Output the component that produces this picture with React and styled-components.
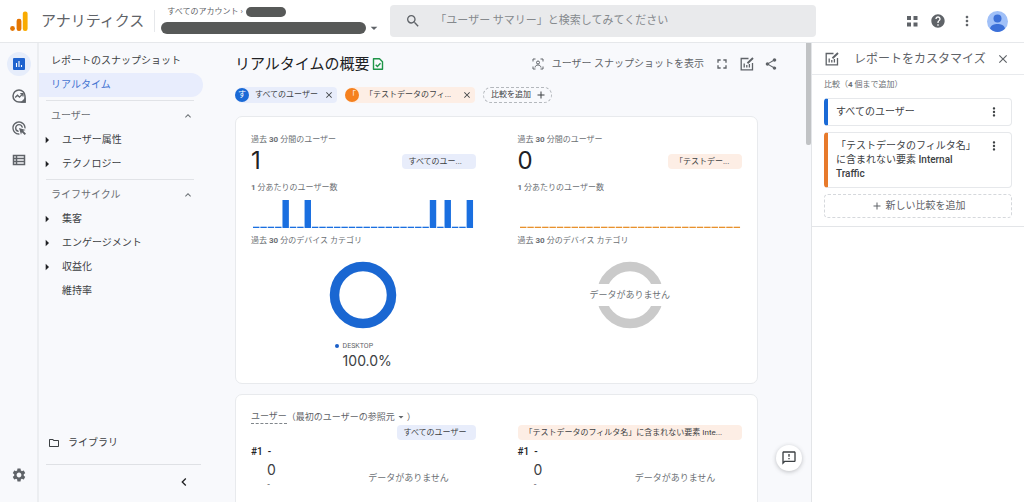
import React from 'react'
import styled, { createGlobalStyle } from 'styled-components'
import {
  MdSearch, MdHelp, MdMoreVert, MdSettings, MdShare, MdFullscreen, MdClose, MdAdd,
  MdExpandLess, MdArrowRight, MdArrowDropDown, MdOutlineFolder, MdChevronLeft,
  MdOutlineFeedback, MdAdsClick
} from 'react-icons/md'

const GlobalStyle = createGlobalStyle`
  * { box-sizing: border-box; }
  body {
    margin: 0;
    background: #f8f9fc;
    color: #3c4043;
    font-family: Roboto, "Noto Sans CJK JP", sans-serif;
    font-size: 10px;
    line-height: 14px;
  }
  h1, h2, h3, p { margin: 0; padding: 0; font-weight: 400; }
  a { color: inherit; text-decoration: none; }
  b { font-weight: 500; }
  button {
    margin: 0;
    padding: 0;
    border: 0;
    background: none;
    color: inherit;
    font: inherit;
    cursor: pointer;
  }
  svg { display: block; flex: none; }
`

const Page = styled.div`
  display: flex;
  flex-direction: column;
  height: 100vh;
  overflow: hidden;
`

/* header */
const Header = styled.header`
  display: flex;
  align-items: center;
  flex: none;
  height: 43px;
  padding: 0 16px 0 9px;
  background: #fff;
  border-bottom: 1px solid #e6e8eb;
`
const Brand = styled.a`
  display: flex;
  align-items: center;
  gap: 12px;
  padding-right: 10px;
  border-right: 1px solid #e6e8eb;
  font-size: 15px;
  line-height: 20px;
  color: #5f6368;
`
const Account = styled.button`
  display: grid;
  grid-template-columns: 205px 14px;
  align-items: center;
  row-gap: 3px;
  margin-left: 6px;
  text-align: left;
`
const AccountPath = styled.span`
  display: flex;
  align-items: center;
  grid-column: 1 / 3;
  padding-left: 6px;
  gap: 3px;
  font-size: 8px;
  line-height: 10px;
  color: #5f6368;
`
const Redacted = styled.span`
  width: ${props => props.w}px;
  height: ${props => props.h}px;
  border-radius: 6px;
  background: #575958;
`
const Search = styled.label`
  display: flex;
  align-items: center;
  flex: 1;
  gap: 14px;
  height: 32px;
  margin-left: 10px;
  padding: 0 15px;
  border-radius: 4px;
  background: #e9eaec;
  color: #5f6368;
`
const SearchInput = styled.input`
  flex: 1;
  min-width: 0;
  padding: 0;
  border: 0;
  outline: 0;
  background: none;
  font: inherit;
  font-size: 11px;
  line-height: 16px;
  color: #3c4043;
  &::placeholder { color: #85898d; opacity: 1; }
`
const HeaderTools = styled.div`
  display: flex;
  align-items: center;
  justify-content: space-between;
  width: 102px;
  margin-left: 90px;
  color: #5f6368;
`
const Body = styled.div`
  display: flex;
  flex: 1;
  min-height: 0;
`

/* left rail */
const Rail = styled.nav`
  display: flex;
  flex-direction: column;
  align-items: center;
  gap: 8px;
  flex: none;
  width: 39px;
  padding: 9px 0 15px;
  border-right: 2px solid #eceef1;
  color: #5f6368;
`
const RailLink = styled.a`
  display: grid;
  place-items: center;
  width: 24px;
  height: 24px;
  border-radius: 12px;
  background: ${props => props.$active ? '#e6edfb' : 'none'};
  &:last-child { margin-top: auto; }
`

/* report navigation */
const Nav = styled.nav`
  display: flex;
  flex-direction: column;
  flex: none;
  width: 164px;
  padding: 6px 0 12px;
`
const NavLink = styled.a`
  display: flex;
  align-items: center;
  height: 24px;
  padding-left: 12px;
  border-radius: 0 12px 12px 0;
  background: ${props => props.$active ? '#e8edfd' : 'none'};
  color: ${props => props.$active ? '#4272d0' : '#3c4043'};
`
const NavGroup = styled.section`
  margin: 3px 9px 0 7px;
  padding-top: 3px;
  border-top: 1px solid #e1e3e7;
`
const GroupHead = styled.button`
  display: flex;
  align-items: center;
  justify-content: space-between;
  width: 100%;
  height: 24px;
  padding-left: 5px;
  color: #6b6f74;
`
const SubLink = styled.a`
  display: flex;
  align-items: center;
  height: 24px;
  padding-left: ${props => props.$leaf ? 16 : 0}px;
  gap: 7px;
  svg { margin-left: -7px; }
`
const NavFoot = styled.div`
  display: flex;
  flex-direction: column;
  margin: auto 2px 0 7px;
`
const Library = styled.a`
  display: flex;
  align-items: center;
  gap: 8px;
  padding: 0 2px 14px;
  border-bottom: 1px solid #dfe1e5;
`
const Collapse = styled.button`
  align-self: flex-end;
  margin: 9px 9px 0 0;
  color: #202124;
`

/* report */
const Main = styled.main`
  flex: 1;
  min-width: 0;
  padding: 11px 48px 0 32px;
  overflow: hidden;
`
const TitleRow = styled.div`
  display: flex;
  align-items: center;
  height: 20px;
  margin-right: -20px;
`
const Title = styled.h1`
  margin-right: 2px;
  font-size: 15px;
  line-height: 20px;
  color: #202124;
`
const Tools = styled.div`
  display: flex;
  align-items: center;
  gap: 10px;
  margin-left: auto;
  color: #5f6368;
`
const SnapshotButton = styled.button`
  display: flex;
  align-items: center;
  gap: 8px;
`
const Chips = styled.div`
  display: flex;
  align-items: center;
  gap: 8px;
  margin: 13px 0;
  font-size: 8px;
`
const tint = props => props.$tone === 'orange' ? '#fdeee5' : '#e8edfb'

const Chip = styled.div`
  display: flex;
  align-items: center;
  gap: 6px;
  min-width: ${props => props.$tone === 'orange' ? 130 : 102}px;
  height: 16px;
  padding-right: 3px;
  border-radius: 8px 4px 4px 8px;
  background: ${tint};
  button { margin-left: auto; }
`
const ChipLetter = styled.span`
  width: 14px;
  height: 14px;
  border-radius: 7px;
  background: ${props => props.$tone === 'orange' ? '#f5811f' : '#1a6ad6'};
  color: #fff;
  text-align: center;
`
const AddChip = styled.button`
  display: flex;
  align-items: center;
  gap: 4px;
  height: 16px;
  padding: 0 4px 0 7px;
  border: 1px dashed #b4b8bd;
  border-radius: 8px;
`
const Card = styled.section`
  margin-bottom: 10px;
  padding: 16px 15px 14px;
  background: #fff;
  border: 1px solid #e8eaed;
  border-radius: 7px;
`
const RankCard = styled(Card)`
  padding: 14px 15px 32px;
`
const Columns = styled.div`
  display: grid;
  grid-template-columns: 1fr 1fr;
  gap: 42px;
`
const Column = styled.div`
  display: flex;
  flex-direction: column;
  min-width: 0;
`
const Label = styled.h3`
  font-size: 8px;
  line-height: 14px;
  color: #6b6f74;
  b { font-weight: 700; }
`
const ValueRow = styled.div`
  display: flex;
  align-items: center;
  justify-content: space-between;
  height: 28px;
  margin-bottom: 6px;
`
const Value = styled.span`
  font-family: Inter, sans-serif;
  font-size: 24px;
  line-height: 28px;
  color: #202124;
`
const Tag = styled.span`
  width: ${props => props.$w};
  height: 15px;
  padding: 0 7px;
  border-radius: 4px;
  background: ${tint};
  font-size: 8px;
  line-height: 15px;
  white-space: nowrap;
  overflow: hidden;
`
const Bars = styled.svg`
  width: 100%;
  height: 28px;
  margin: 5px 0 6px;
`
const DonutWrap = styled.div`
  display: grid;
  place-items: center;
  margin-top: 13px;
  > * { grid-area: 1 / 1; }
`
const Empty = styled.p`
  font-size: 9px;
  line-height: 22px;
  color: #6b6f74;
  background: #fff;
`
const Legend = styled.div`
  display: grid;
  grid-template-columns: 4px auto;
  align-items: center;
  align-self: center;
  column-gap: 4px;
  margin: 10px 0 0;
  font-size: 7px;
  color: #5f6368;
`
const Dot = styled.span`
  width: 4px;
  height: 4px;
  border-radius: 2px;
  background: #1a5fc8;
`
const Percent = styled.strong`
  grid-column: 2;
  font: 400 14px/16px Inter, sans-serif;
  color: #3c4043;
`
const CardTitle = styled.h2`
  display: flex;
  align-items: center;
  margin-bottom: 1px;
  font-size: 9px;
  line-height: 14px;
  color: #5f6368;
`
const Metric = styled.span`
  border-bottom: 1px dashed #80868b;
`
const RankTag = styled(Tag)`
  align-self: flex-end;
`
const Rank = styled.p`
  margin-top: 5px;
  font-size: 10px;
  font-weight: 500;
  color: #202124;
`
const RankBody = styled.div`
  display: grid;
  grid-template-columns: 1fr 134px;
  align-items: end;
  text-align: center;
`
const RankValue = styled.div`
  justify-self: start;
  padding-left: 16px;
  font: 400 14px/22px Inter, sans-serif;
  color: #3c4043;
`
const Trend = styled.small`
  display: block;
  font-size: 7px;
  line-height: 8px;
  text-align: left;
`
const Scroll = styled.div`
  flex: none;
  width: 5px;
  &::before {
    content: '';
    display: block;
    height: 102px;
    border-radius: 0 0 2px 2px;
    background: #c1c3c5;
  }
`

/* customise panel */
const Panel = styled.aside`
  flex: none;
  width: 213px;
  background: #fff;
  border-left: 1px solid #e3e5e8;
`
const PanelHead = styled.div`
  display: flex;
  align-items: center;
  height: 32px;
  padding: 0 14px 0 13px;
  border-bottom: 1px solid #e8eaed;
  color: #5f6368;
`
const PanelTitle = styled.h2`
  flex: 1;
  margin-left: 15px;
  font-size: 12px;
  line-height: 16px;
`
const PanelBody = styled.div`
  display: flex;
  flex-direction: column;
  gap: 6px;
  padding: 3px 12px 8px;
  border-bottom: 1px solid #e3e5e8;
`
const Comparison = styled.div`
  display: flex;
  align-items: flex-start;
  justify-content: space-between;
  padding: 6px 10px 6px 8px;
  border: 1px solid #e6e8eb;
  border-left: 4px solid ${props => props.$tone === 'orange' ? '#e77a2b' : '#1a6ad6'};
  border-radius: 4px;
`
const AddComparison = styled.button`
  display: flex;
  align-items: center;
  justify-content: center;
  gap: 3px;
  height: 24px;
  border: 1px dashed #d5d8dc;
  border-radius: 4px;
  color: #5f6368;
`
const Feedback = styled.button`
  position: fixed;
  right: 222px;
  bottom: 31px;
  display: grid;
  place-items: center;
  width: 26px;
  height: 26px;
  border-radius: 13px;
  background: #fff;
  box-shadow: 0 1px 4px rgba(60, 64, 67, 0.3);
`

const Logo = () => (
  <svg width="20" height="22" viewBox="0 0 20 22">
    <circle cx="3.5" cy="18.5" r="2.4" fill="#e37400" />
    <rect x="7.6" y="8.8" width="4.8" height="12.2" rx="2.2" fill="#e37400" />
    <rect x="13.8" y="1.5" width="4.8" height="19.5" rx="2.2" fill="#f9ab00" />
  </svg>
)
const Avatar = () => (
  <svg width="21" height="21" viewBox="0 0 42 42">
    <circle cx="21" cy="21" r="21" fill="#a0c0f8" />
    <circle cx="21" cy="15" r="8" fill="#3c70d8" />
    <path d="M6 35c2-7 8-9 15-9s13 2 15 9c-4 4-9 7-15 7S10 39 6 35z" fill="#3c70d8" />
  </svg>
)
const AppsIcon = () => (
  <svg width="12" height="12" viewBox="0 0 12 12" fill="currentColor">
    <path d="M1 1h4v4H1zM7.5 1h4v4h-4zM1 7.5h4v4H1zM7.5 7.5h4v4h-4z" />
  </svg>
)
const ReportsIcon = () => (
  <svg width="12" height="12" viewBox="0 0 12 12">
    <rect width="12" height="12" rx="1" fill="#1f63cf" />
    <path d="M3.5 5v4M6 3v6M8.5 7v2" stroke="#fff" strokeWidth="1.1" />
  </svg>
)
const ExploreIcon = () => (
  <svg width="14" height="14" viewBox="0 0 14 14" fill="none" stroke="currentColor" strokeWidth="1.5">
    <path d="M13 13H7a6 6 0 1 1 6-6z" />
    <path d="M3.2 8.5l2.3-2.3 2 2 3.3-3.3M8.3 4.7h2.7v2.7" strokeWidth="1.3" />
    <path d="M10 13l3-3v3z" fill="currentColor" />
  </svg>
)
const TableIcon = () => (
  <svg width="14" height="12" viewBox="0 0 14 12" fill="none" stroke="currentColor" strokeWidth="1.5">
    <path d="M1.5 1.5h11v9h-11zM1.5 4.5h11M1.5 7.5h11M4.5 1.5v9" />
  </svg>
)
const CheckDoc = () => (
  <svg width="12" height="14" viewBox="0 0 12 14" fill="none" stroke="#1e9447" strokeWidth="1.4">
    <path d="M1.5 1.7h6l3 3v7.6h-9z" strokeLinejoin="round" />
    <path d="M3.7 7.7l1.7 1.7 3.1-3.1" />
  </svg>
)
const SnapshotIcon = () => (
  <svg width="12" height="12" viewBox="0 0 12 12" fill="none" stroke="currentColor">
    <path d="M1 3.5V1h2.5M8.5 1H11v2.5M11 8.5V11H8.5M3.5 11H1V8.5" />
    <circle cx="6" cy="4.5" r="1.5" />
    <path d="M3 9.5c.5-2 1.5-2.5 3-2.5s2.5.5 3 2.5" />
  </svg>
)
const ChartEditIcon = () => (
  <svg width="14" height="14" viewBox="0 0 14 14" fill="none" stroke="currentColor" strokeWidth="1.3">
    <path d="M8.5 1.5H1.2v11.3h11.3V6" />
    <path d="M4.2 6.5v4M6.8 8v2.5M9.4 7v3.5" />
    <path d="M7.5 6.3l5.5-5.3" strokeWidth="1.9" />
  </svg>
)

const reportGroups = [
  { title: 'ユーザー', items: ['ユーザー属性', 'テクノロジー'] },
  { title: 'ライフサイクル', items: ['集客', 'エンゲージメント', '収益化', '維持率'] }
]

const MinuteBars = ({ peaks, color }) => (
  <Bars viewBox="0 0 224 28" preserveAspectRatio="none" role="img" aria-label="1 分あたりのユーザー数">
    {Array.from({ length: 30 }, (_, i) => {
      const h = peaks.includes(i) ? 28 : 1.3
      return <rect key={i} x={2 + i * 7.35} y={28 - h} width="6.4" height={h} fill={color} />
    })}
  </Bars>
)

const Donut = ({ color }) => (
  <svg width="68" height="68" viewBox="0 0 68 68">
    <circle cx="34" cy="34" r="28.5" fill="none" stroke={color} strokeWidth="9.5" />
  </svg>
)

const RankColumn = ({ tone, width, name }) => (
  <Column>
    <RankTag $tone={tone} $w={width}>{name}</RankTag>
    <Rank>#1&nbsp; -</Rank>
    <RankBody>
      <RankValue>0<Trend>-</Trend></RankValue>
      <Empty>データがありません</Empty>
    </RankBody>
  </Column>
)

const App = () => (
  <Page>
    <GlobalStyle />
    <Header>
      <Brand href="#home"><Logo />アナリティクス</Brand>
      <Account aria-label="アカウントを選択">
        <AccountPath>すべてのアカウント ›<Redacted w={40} h={10} /></AccountPath>
        <Redacted w={205} h={12} />
        <MdArrowDropDown size={16} color="#5f6368" />
      </Account>
      <Search>
        <MdSearch size={16} />
        <SearchInput type="search" aria-label="検索" placeholder="「ユーザー サマリー」と検索してみてください" />
      </Search>
      <HeaderTools>
        <button aria-label="アプリ"><AppsIcon /></button>
        <button aria-label="ヘルプ"><MdHelp size={16} /></button>
        <button aria-label="その他"><MdMoreVert size={16} /></button>
        <button aria-label="プロフィール"><Avatar /></button>
      </HeaderTools>
    </Header>
    <Body>
      <Rail>
        <RailLink href="#reports" aria-label="レポート" $active><ReportsIcon /></RailLink>
        <RailLink href="#explore" aria-label="探索"><ExploreIcon /></RailLink>
        <RailLink href="#ads" aria-label="広告"><MdAdsClick size={16} /></RailLink>
        <RailLink href="#configure" aria-label="設定"><TableIcon /></RailLink>
        <RailLink href="#admin" aria-label="管理"><MdSettings size={16} /></RailLink>
      </Rail>
      <Nav>
        <NavLink href="#snapshot">レポートのスナップショット</NavLink>
        <NavLink href="#realtime" $active>リアルタイム</NavLink>
        {reportGroups.map(group => (
          <NavGroup key={group.title}>
            <GroupHead>{group.title}<MdExpandLess size={12} /></GroupHead>
            {group.items.map(item => (
              <SubLink key={item} href="#report" $leaf={item === '維持率'}>
                {item !== '維持率' && <MdArrowRight size={16} color="#202124" />}
                {item}
              </SubLink>
            ))}
          </NavGroup>
        ))}
        <NavFoot>
          <Library href="#library"><MdOutlineFolder size={12} />ライブラリ</Library>
          <Collapse aria-label="折りたたむ"><MdChevronLeft size={16} /></Collapse>
        </NavFoot>
      </Nav>
      <Main>
        <TitleRow>
          <Title>リアルタイムの概要</Title>
          <CheckDoc />
          <Tools>
            <SnapshotButton><SnapshotIcon />ユーザー スナップショットを表示</SnapshotButton>
            <button aria-label="全画面"><MdFullscreen size={16} /></button>
            <button aria-label="カスタマイズ"><ChartEditIcon /></button>
            <button aria-label="共有"><MdShare size={14} /></button>
          </Tools>
        </TitleRow>
        <Chips>
          <Chip>
            <ChipLetter>す</ChipLetter>すべてのユーザー
            <button aria-label="削除"><MdClose size={10} /></button>
          </Chip>
          <Chip $tone="orange">
            <ChipLetter $tone="orange">「</ChipLetter>「テストデータのフィ...
            <button aria-label="削除"><MdClose size={10} /></button>
          </Chip>
          <AddChip>比較を追加<MdAdd size={12} /></AddChip>
        </Chips>
        <Card>
          <Columns>
            <Column>
              <Label>過去 <b>30</b> 分間のユーザー</Label>
              <ValueRow><Value>1</Value><Tag $w="74px">すべてのユー...</Tag></ValueRow>
              <Label><b>1</b> 分あたりのユーザー数</Label>
              <MinuteBars peaks={[4, 7, 24, 26, 29]} color="#1a6fe0" />
              <Label>過去 <b>30</b> 分のデバイス カテゴリ</Label>
              <DonutWrap><Donut color="#1a67d2" /></DonutWrap>
              <Legend><Dot />DESKTOP<Percent>100.0%</Percent></Legend>
            </Column>
            <Column>
              <Label>過去 <b>30</b> 分間のユーザー</Label>
              <ValueRow><Value>0</Value><Tag $tone="orange" $w="74px">「テストデー...</Tag></ValueRow>
              <Label><b>1</b> 分あたりのユーザー数</Label>
              <MinuteBars peaks={[]} color="#e8912d" />
              <Label>過去 <b>30</b> 分のデバイス カテゴリ</Label>
              <DonutWrap><Donut color="#cacaca" /><Empty>データがありません</Empty></DonutWrap>
            </Column>
          </Columns>
        </Card>
        <RankCard>
          <CardTitle>
            <Metric>ユーザー</Metric>（最初のユーザーの参照元<MdArrowDropDown size={12} />）
          </CardTitle>
          <Columns>
            <RankColumn width="79px" name="すべてのユーザー" />
            <RankColumn tone="orange" width="100%" name="「テストデータのフィルタ名」に含まれない要素 Inte..." />
          </Columns>
        </RankCard>
      </Main>
      <Scroll />
      <Panel>
        <PanelHead>
          <ChartEditIcon />
          <PanelTitle>レポートをカスタマイズ</PanelTitle>
          <button aria-label="閉じる"><MdClose size={14} /></button>
        </PanelHead>
        <PanelBody>
          <Label>比較（<b>4</b> 個まで追加）</Label>
          <Comparison>
            すべてのユーザー
            <button aria-label="メニュー"><MdMoreVert size={14} /></button>
          </Comparison>
          <Comparison $tone="orange">
            <span>「テストデータのフィルタ名」<br />に含まれない要素 <b>Internal</b><br /><b>Traffic</b></span>
            <button aria-label="メニュー"><MdMoreVert size={14} /></button>
          </Comparison>
          <AddComparison><MdAdd size={12} />新しい比較を追加</AddComparison>
        </PanelBody>
      </Panel>
    </Body>
    <Feedback aria-label="フィードバック"><MdOutlineFeedback size={16} /></Feedback>
  </Page>
)

export default App
